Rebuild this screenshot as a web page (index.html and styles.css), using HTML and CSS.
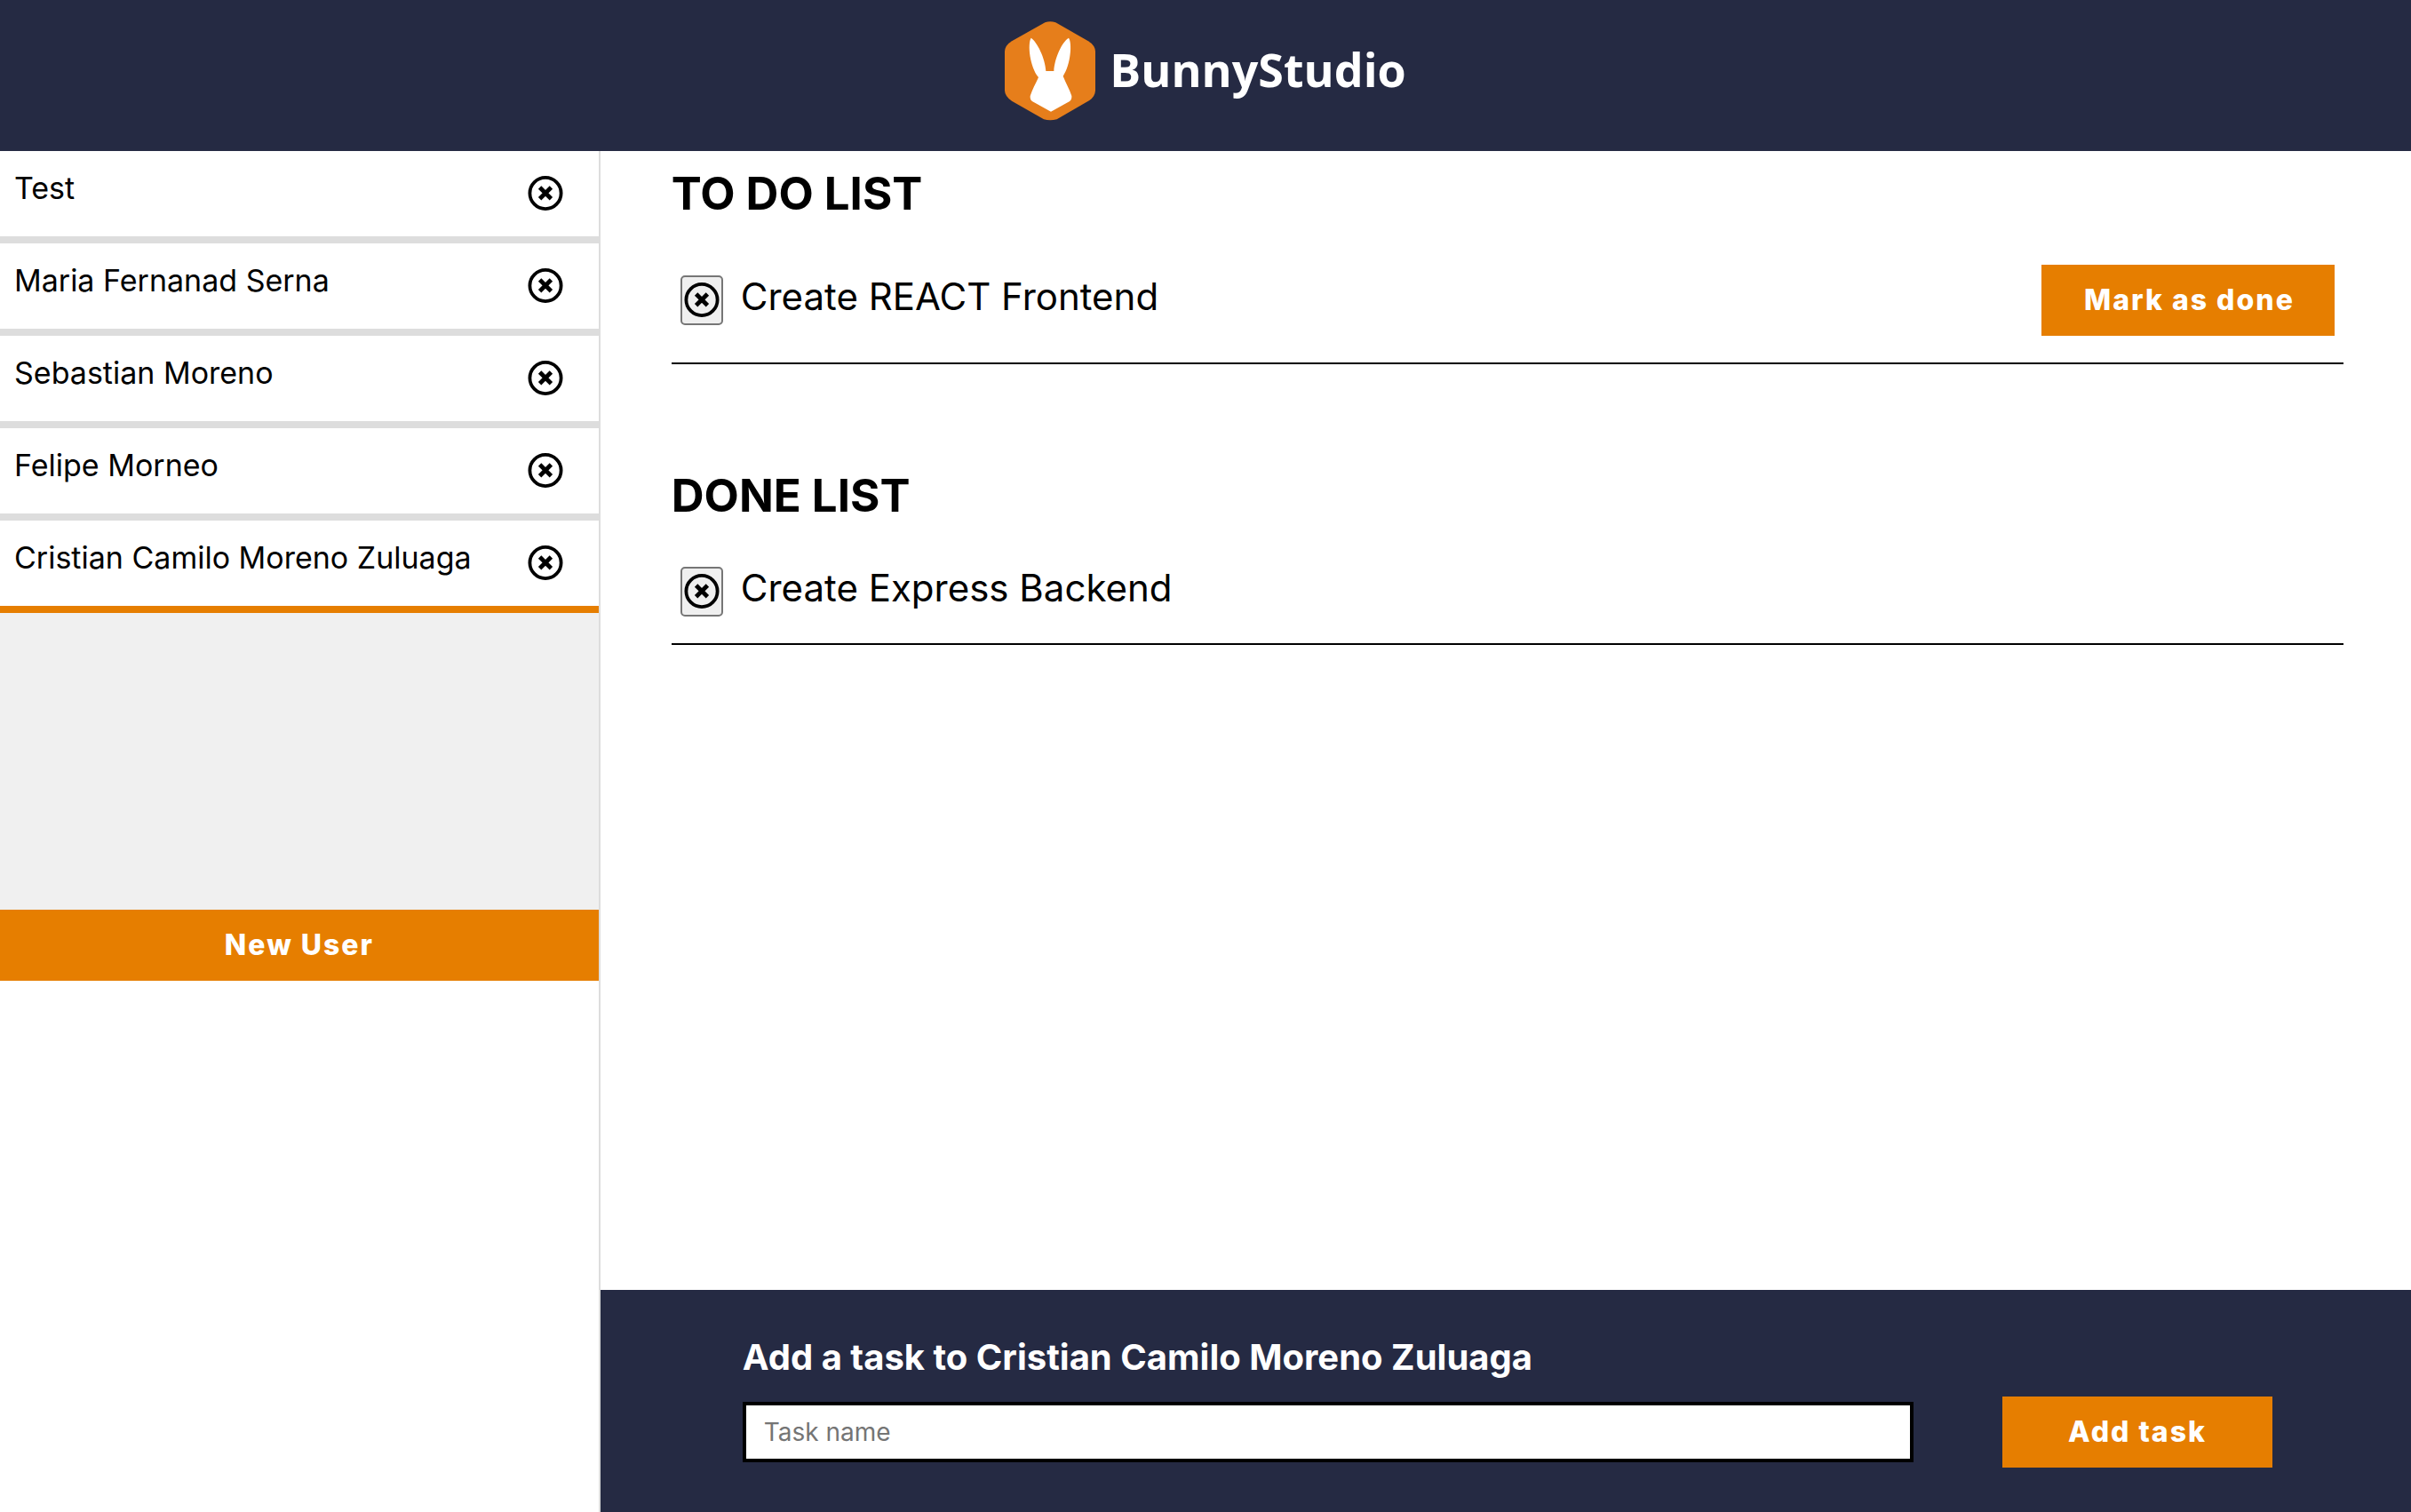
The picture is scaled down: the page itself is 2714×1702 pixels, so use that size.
FILE: index.html
```html
<!DOCTYPE html>
<html lang="en">
<head>
<meta charset="utf-8">
<title>BunnyStudio</title>
<link rel="stylesheet" href="styles.css">
</head>
<body>
<svg class="sprite" aria-hidden="true">
  <symbol id="close" viewBox="0 0 40 40">
    <circle cx="20" cy="19.5" r="17.6" fill="none" stroke="currentColor" stroke-width="3.8"/>
    <path d="M13.6 13 26.4 25.8M26.4 13 13.6 25.8" stroke="currentColor" stroke-width="4.8"/>
  </symbol>
</svg>
<header class="topbar">
  <svg class="logo" viewBox="66 70 306 336" aria-hidden="true">
    <path fill="#e67e1b" d="M202 74Q219 68 238 74L348 137Q371 151 372 172V304Q371 324 352 337L242 401Q219 407 198 401L90 339Q67 324 66 304V172Q67 151 90 137Z"/>
    <path fill="#fff" d="M155 126C175 139 203 195 205 238H232C234 195 259 140 282 126C294 141 290 214 263 255C272 278 286 302 292 322Q293 335 284 341L222 375L160 341Q151 336 152 322C158 302 171 280 180 259C151 225 142 146 155 126Z"/>
  </svg>
  <span class="wordmark">BunnyStudio</span>
</header>
<div class="layout">
  <aside class="sidebar">
    <ul class="users">
      <li class="user"><button class="user-name">Test</button><button class="remove" aria-label="Delete Test"><svg class="icon"><use href="#close"/></svg></button></li>
      <li class="user"><button class="user-name">Maria Fernanad Serna</button><button class="remove" aria-label="Delete Maria Fernanad Serna"><svg class="icon"><use href="#close"/></svg></button></li>
      <li class="user"><button class="user-name">Sebastian Moreno</button><button class="remove" aria-label="Delete Sebastian Moreno"><svg class="icon"><use href="#close"/></svg></button></li>
      <li class="user"><button class="user-name">Felipe Morneo</button><button class="remove" aria-label="Delete Felipe Morneo"><svg class="icon"><use href="#close"/></svg></button></li>
      <li class="user selected"><button class="user-name">Cristian Camilo Moreno Zuluaga</button><button class="remove" aria-label="Delete Cristian Camilo Moreno Zuluaga"><svg class="icon"><use href="#close"/></svg></button></li>
    </ul>
    <button class="btn new-user">New User</button>
  </aside>
  <main class="content">
    <div class="lists">
      <section class="list">
        <h1 class="list-title">TO DO LIST</h1>
        <ul class="tasks">
          <li class="task">
            <button class="task-remove" aria-label="Delete Create REACT Frontend"><svg class="icon"><use href="#close"/></svg></button>
            <span class="task-name">Create REACT Frontend</span>
            <button class="btn mark">Mark as done</button>
          </li>
        </ul>
      </section>
      <section class="list">
        <h1 class="list-title">DONE LIST</h1>
        <ul class="tasks">
          <li class="task">
            <button class="task-remove" aria-label="Delete Create Express Backend"><svg class="icon"><use href="#close"/></svg></button>
            <span class="task-name">Create Express Backend</span>
          </li>
        </ul>
      </section>
    </div>
    <form class="add">
      <label class="add-title" for="task">Add a task to Cristian Camilo Moreno Zuluaga</label>
      <div class="add-row">
        <input class="add-input" id="task" type="text" placeholder="Task name">
        <button class="btn add-btn" type="button">Add task</button>
      </div>
    </form>
  </main>
</div>
</body>
</html>
```
FILE: styles.css
```css
* { box-sizing: border-box; }

body {
  margin: 0;
  min-height: 100vh;
  display: flex;
  flex-direction: column;
  background: #fff;
  color: #000;
  font-family: Inter, "Open Sans", sans-serif;
}

button, input { font-family: inherit; color: inherit; }
button { cursor: pointer; }
ul { list-style: none; margin: 0; padding: 0; }

.sprite { display: none; }
.icon { display: block; width: 40px; height: 40px; }

.topbar {
  display: flex;
  justify-content: center;
  align-items: center;
  gap: 16px;
  padding: 24px 0 34px;
  background: #252a43;
}
.logo { width: 102px; height: 112px; }
.wordmark {
  padding-bottom: 4px;
  color: #fff;
  font: 700 52px/72px "Open Sans", "Noto Sans", sans-serif;
}

.layout { flex: 1; display: flex; }

.sidebar {
  flex: 0 0 24.9%;
  border-right: 2px solid #ddd;
}
.users { min-height: 854px; background: #f0f0f0; }
.user {
  display: flex;
  align-items: center;
  justify-content: space-between;
  height: 104px;
  padding: 0 40px 0 16px;
  background: #fff;
  border-bottom: 8px solid #ddd;
}
.user.selected { border-bottom-color: #e67e00; }
.user-name {
  padding: 0 0 12px;
  border: 0;
  background: none;
  font-size: 34px;
  line-height: 40px;
  white-space: nowrap;
}
.remove { padding: 0; border: 0; background: none; }

.btn {
  height: 80px;
  padding: 0 48px;
  border: 0;
  background: #e67e00;
  color: #fff;
  font-size: 32px;
  font-weight: 800;
  line-height: 40px;
  letter-spacing: 2px;
  white-space: nowrap;
}
.new-user { display: block; width: 100%; }

.content {
  flex: 1;
  display: flex;
  flex-direction: column;
}
.lists {
  flex: 1;
  display: flex;
  flex-direction: column;
  gap: 118px;
  padding: 18px 76px 0 80px;
}
.list-title {
  margin: 0 0 50px;
  font-size: 51px;
  font-weight: 700;
  line-height: 60px;
}
.task {
  display: flex;
  align-items: center;
  padding: 0 10px 30px;
  border-bottom: 2px solid #000;
}
.task-remove {
  display: flex;
  justify-content: center;
  align-items: center;
  width: 48px;
  height: 56px;
  padding: 0;
  border: 2px solid #767676;
  border-radius: 5px;
  background: #efefef;
}
.task-name {
  flex: 1;
  padding: 0 20px 8px;
  font-size: 42px;
  line-height: 48px;
}
.mark { width: 330px; }

.add {
  display: flex;
  flex-direction: column;
  gap: 20px;
  padding: 52px 156px 50px 160px;
  background: #252a43;
}
.add-title {
  color: #fff;
  font-size: 40px;
  font-weight: 700;
  line-height: 48px;
}
.add-row { display: flex; align-items: center; gap: 100px; }
.add-input {
  flex: 1;
  height: 68px;
  padding: 0 20px;
  border: 4px solid #000;
  border-radius: 0;
  background: #fff;
  font-size: 28px;
}
.add-input::placeholder { color: #757575; opacity: 1; }
.add-btn { width: 304px; }
```
